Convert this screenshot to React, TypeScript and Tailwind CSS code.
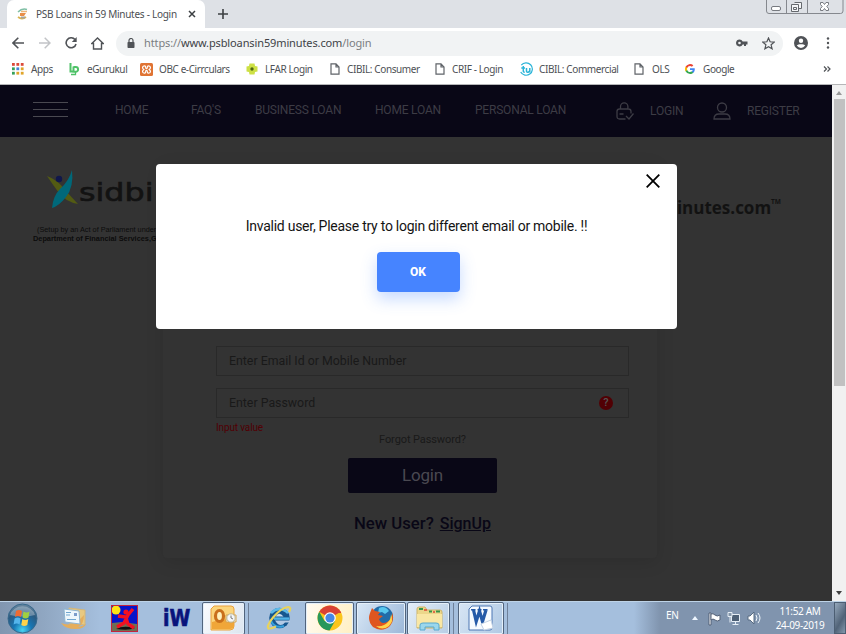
import React from 'react';

function FileIcon() {
  return (
    <svg width="10" height="12" viewBox="0 0 10 12" fill="none" stroke="#5f6368" strokeWidth="1.2">
      <path d="M1 .8h5L9 4v7.2H1zM6 .8V4h3" />
    </svg>
  );
}

function AppsIcon() {
  const colors = ['#dc4a3a', '#dc4a3a', '#dc4a3a', '#35a05a', '#4384d8', '#e0a52a', '#35a05a', '#e0a52a', '#e0a52a'];
  return (
    <svg width="12" height="12" viewBox="0 0 12 12">
      {colors.map((c, i) => (
        <rect key={i} x={(i % 3) * 4.4} y={Math.floor(i / 3) * 4.4} width="2.8" height="2.8" fill={c} />
      ))}
    </svg>
  );
}

function GurukulIcon() {
  return (
    <svg width="12" height="14" viewBox="0 0 12 14" fill="none" stroke="#4fc268">
      <path d="M2.500 1v8.500h3" strokeWidth="2" />
      <path d="M5.500 4.500v6M5.500 5h2.200a2.200 2.200 0 0 1 0 4.800H5.500" strokeWidth="2" />
      <path d="M3 12.500h4.500V10" strokeWidth="1.300" />
    </svg>
  );
}

function XamppIcon() {
  return (
    <svg width="13" height="13" viewBox="0 0 13 13">
      <rect width="13" height="13" rx="1.500" fill="#e07434" />
      <path d="M3.300 3.200c1.600-.9 2.400 0 2.400 1.400 0 1.500 1.600 1.500 1.600 0 0-1.400.8-2.300 2.400-1.400 1.300.8.8 2.300-.5 3.300 1.300 1 1.800 2.500.5 3.300-1.600.9-2.400 0-2.400-1.400 0-1.500-1.600-1.500-1.600 0 0 1.400-.8 2.300-2.400 1.400-1.300-.8-.8-2.300.5-3.300-1.300-1-1.800-2.500-.5-3.300z" fill="none" stroke="#fff" strokeWidth="1.200" />
    </svg>
  );
}

function LfarIcon() {
  return (
    <svg width="12" height="12" viewBox="0 0 12 12">
      <path d="M3.500.5h5l.5 2.500 2.500.5v5L9 9l-.5 2.500h-5L3 9 .5 8.500v-5L3 3z" fill="#cde045" />
      <circle cx="6" cy="6" r="1.700" fill="#4d6510" />
    </svg>
  );
}

function TuIcon() {
  return (
    <svg width="14" height="14" viewBox="0 0 14 14" fill="none" stroke="#2bb4d8" strokeWidth="1.200">
      <path d="M2.300 3.200a6.200 6.200 0 1 1-.6 6.800" />
      <path d="M4.300 4v5q0 1.500 1.500 1M2.300 6H6M7.500 6v3q0 1.400 1.400 1.200Q10.800 10 10.800 8V6v4.500" strokeWidth="1.500" />
    </svg>
  );
}

function GoogleIcon() {
  return (
    <svg width="10" height="10" viewBox="0 0 24 24">
      <path fill="#4285f4" d="M23.500 12.300c0-.8-.1-1.600-.2-2.300H12v4.500h6.500a5.500 5.500 0 0 1-2.400 3.600v3h3.900c2.200-2.100 3.500-5.200 3.500-8.800z" />
      <path fill="#34a853" d="M12 24c3.200 0 6-1.100 8-2.900l-3.900-3c-1.100.7-2.500 1.200-4.100 1.200-3.100 0-5.800-2.100-6.700-5H1.300v3.100A12 12 0 0 0 12 24z" />
      <path fill="#fbbc05" d="M5.300 14.300a7 7 0 0 1 0-4.600V6.600h-4a12 12 0 0 0 0 10.800z" />
      <path fill="#ea4335" d="M12 4.800c1.800 0 3.300.6 4.600 1.800L20 3.200A12 12 0 0 0 1.300 6.600l4 3.100c.9-2.900 3.600-4.900 6.700-4.900z" />
    </svg>
  );
}

function Favicon() {
  return (
    <svg width="14" height="14" viewBox="0 0 14 14" fill="none">
      <path d="M2 5Q6 1 11 2.500" stroke="#7fbfa5" strokeWidth="1.500" />
      <path d="M4 6h6l-2 3H4z" fill="#e88f49" />
      <path d="M5 4.500h6" stroke="#edb77a" strokeWidth="1.500" />
      <path d="M2 10q4 3 8 0" stroke="#d9b451" strokeWidth="1.800" />
      <path d="M5 9.500h4v2H5z" fill="#a7a4a0" />
    </svg>
  );
}

function TabStrip() {
  return (
    <header className="flex h-7 shrink-0 items-start bg-[#dee1e6]">
      <div className="ml-[7px] flex h-7 w-[198px] items-center rounded-t-[7px] bg-white pl-[9px]">
        <Favicon />
        <span className="ml-[6px] w-[150px] whitespace-nowrap text-[10px] tracking-[-0.27px] text-[#4b4e52]">PSB Loans in 59 Minutes - Login</span>
        <svg className="ml-[2px]" width="8" height="8" viewBox="0 0 8 8" stroke="#3c4043" strokeWidth="1.500"><path d="M1 1l6 6M7 1L1 7" /></svg>
      </div>
      <svg className="ml-[13px] mt-[9px]" width="10" height="10" viewBox="0 0 10 10" stroke="#3c4043" strokeWidth="1.600"><path d="M5 0v10M0 5h10" /></svg>
      <svg className="ml-auto mr-[2px]" width="78" height="15" viewBox="0 0 78 15" fill="none" stroke="#85888e">
        <path d="M.5 0v11q0 2.500 2.500 2.500h71.500q2.500 0 2.500-2.500V0M20.500 0v13M41.500 0v13" />
        <rect x="5.500" y="6.500" width="9" height="4" rx="1.500" fill="#fff" stroke="#777a80" />
        <path d="M28.500 2.500h7v6h-3M25.500 4.500h7v7h-7zM27.500 7.500h3v2h-3z" fill="#f4f5f7" stroke="#65686d" />
        <path d="M54.500 2.500h2.500l1.500 2 1.500-2h2.500v2l-1.700 2 1.700 2v2H60l-1.500-2-1.500 2h-2.500v-2l1.700-2-1.700-2z" fill="#fff" stroke="#777a80" />
      </svg>
    </header>
  );
}

function Toolbar() {
  return (
    <div className="flex h-[30px] shrink-0 items-center bg-white pl-3">
      <svg width="12" height="12" viewBox="0 0 12 12" fill="none" stroke="#505357" strokeWidth="1.600"><path d="M12 6H1.200M6.300.8L1 6l5.300 5.200" /></svg>
      <svg className="ml-[15px]" width="12" height="12" viewBox="0 0 12 12" fill="none" stroke="#c2c4c7" strokeWidth="1.500"><path d="M0 6h10.800M5.700.8L11 6l-5.300 5.200" /></svg>
      <svg className="ml-[14px]" width="12" height="12" viewBox="0 0 12 12" fill="none" stroke="#505357" strokeWidth="1.600"><path d="M10 2.600A5 5 0 1 0 11 7" /><path d="M11.700 0v5H6.800z" fill="#505357" stroke="none" /></svg>
      <svg className="ml-[14px]" width="13" height="13" viewBox="0 0 13 13" fill="none" stroke="#505357" strokeWidth="1.400"><path d="M.8 6.500L6.500 1l5.700 5.500H10.500V12h-8V6.500z" /></svg>
      <div className="ml-[12px] flex h-[25px] w-[667px] items-center rounded-full bg-[#f1f3f4] pl-[11px]">
        <svg width="8" height="10" viewBox="0 0 8 10"><rect x=".5" y="4" width="7" height="6" rx=".7" fill="#505357" /><path d="M2 4V2.500a2 2 0 0 1 4 0V4" fill="none" stroke="#505357" strokeWidth="1.200" /></svg>
        <span className="ml-[9px] text-[11px] tracking-[-0.12px] text-[#7b7e82]">https://<span className="text-[#404246]">www.psbloansin59minutes.com</span>/login</span>
        <svg className="ml-auto" width="12" height="8" viewBox="0 0 12 8"><path fill="#505357" fillRule="evenodd" d="M3.500.5a3.500 3.500 0 1 0 3.200 5H8V7h2V5.500h1.500v-3H6.700A3.500 3.500 0 0 0 3.500.5zm0 2.200a1.300 1.300 0 1 1 0 2.600 1.300 1.300 0 0 1 0-2.600z" /></svg>
        <svg className="ml-[14px] mr-[8px]" width="13" height="13" viewBox="0 0 13 13" fill="none" stroke="#505357" strokeWidth="1.200"><path d="M6.500 1l1.600 3.800 4.100.3-3.100 2.700 1 4-3.600-2.100-3.600 2.100 1-4L.8 5.100l4.100-.3z" /></svg>
      </div>
      <svg className="ml-[11px]" width="14" height="14" viewBox="0 0 14 14"><path fillRule="evenodd" fill="#505357" d="M7 0a7 7 0 1 0 0 14A7 7 0 0 0 7 0zm0 2.500a2.200 2.200 0 1 1 0 4.400 2.200 2.200 0 0 1 0-4.400zM2.800 9.600C4 7.700 10 7.700 11.200 9.600Q9.500 12 7 12T2.800 9.600z" /></svg>
      <svg className="ml-[18px]" width="4" height="12" viewBox="0 0 4 12" fill="#505357"><circle cx="2" cy="1.500" r="1.200" /><circle cx="2" cy="6" r="1.200" /><circle cx="2" cy="10.500" r="1.200" /></svg>
    </div>
  );
}

const bookmarks = [
  { name: 'Apps', icon: <AppsIcon />, width: 'w-[56px]', gap: 'gap-[7px]' },
  { name: 'eGurukul', icon: <GurukulIcon />, width: 'w-[72px]', gap: 'gap-[7px]' },
  { name: 'OBC e-Cirrculars', icon: <XamppIcon />, width: 'w-[106px]', gap: 'gap-[6px]' },
  { name: 'LFAR Login', icon: <LfarIcon />, width: 'w-[84px]', gap: 'gap-[7px]' },
  { name: 'CIBIL: Consumer', icon: <FileIcon />, width: 'w-[105px]', gap: 'gap-[7px]' },
  { name: 'CRIF - Login', icon: <FileIcon />, width: 'w-[84px]', gap: 'gap-[7px]' },
  { name: 'CIBIL: Commercial', icon: <TuIcon />, width: 'w-[115px]', gap: 'gap-[6px]' },
  { name: 'OLS', icon: <FileIcon />, width: 'w-[51px]', gap: 'gap-[8px]' },
  { name: 'Google', icon: <GoogleIcon />, width: 'w-[138px]', gap: 'gap-[8px]' },
];

function Bookmarks() {
  return (
    <div className="flex h-[27px] shrink-0 items-center border-b border-[#b5b6b8] bg-white pb-[4px] pl-3 text-[10px] tracking-[-0.4px] text-[#4e5155]">
      {bookmarks.map((b) => (
        <div key={b.name} className={`flex shrink-0 items-center whitespace-nowrap ${b.width} ${b.gap}`}>
          {b.icon}
          <span>{b.name}</span>
        </div>
      ))}
      <svg width="8" height="6" viewBox="0 0 8 6" fill="none" stroke="#505357" strokeWidth="1.200"><path d="M1 .5L3.500 3 1 5.500M4.500 .5L7 3 4.500 5.500" /></svg>
    </div>
  );
}

function Nav() {
  return (
    <nav className="flex h-[52px] shrink-0 items-center bg-[#090716] pl-[33px] font-['Roboto',sans-serif] text-[12px] tracking-[-0.2px] text-[#3d3c45]">
      <div className="flex w-[82px] flex-col gap-[6px] pb-1">
        <i className="h-px w-[35px] bg-[#4a4951]" /><i className="h-px w-[35px] bg-[#4a4951]" /><i className="h-px w-[35px] bg-[#4a4951]" />
      </div>
      <span className="w-[76px] pb-[2px]">HOME</span>
      <span className="w-[64px] pb-[2px]">FAQ'S</span>
      <span className="w-[120px] pb-[2px]">BUSINESS LOAN</span>
      <span className="w-[100px] pb-[2px]">HOME LOAN</span>
      <span className="w-[141px] pb-[2px]">PERSONAL LOAN</span>
      <svg width="18" height="18" viewBox="0 0 18 18" fill="none" stroke="#3d3c45" strokeWidth="1.300"><path d="M4.500 7V4.500a3.700 3.700 0 0 1 7.400 0V7M9.500 17H3.500q-2.500 0-2.500-2.500v-5Q1 7 3.500 7h9Q15 7 15 9.500v2M3.500 12h4M10 14l3 3 4.500-5.500" /></svg>
      <span className="ml-[16px] w-[63px]">LOGIN</span>
      <svg width="18" height="18" viewBox="0 0 18 18" fill="none" stroke="#3d3c45" strokeWidth="1.300"><circle cx="9" cy="5.500" r="4.500" /><path d="M1 17q0-5 5-5h6q5 0 5 5z" /></svg>
      <span className="ml-[16px]">REGISTER</span>
    </nav>
  );
}

function Sidbi() {
  return (
    <div className="ml-[33px] mt-[32px] w-[200px] whitespace-nowrap text-[#0c0c0c]">
      <div className="flex items-start pl-[14px]">
        <svg width="31" height="40" viewBox="0 0 31 40">
          <path d="M0 7Q11 11 18 21L31 35Q19 33 12 24 6 16 0 7z" fill="#535b13" />
          <path d="M25 1Q27 18 19 28 12 37 5 39 6 27 13 20 22 12 25 1z" fill="#006879" />
          <circle cx="12" cy="10" r="3.200" fill="#10174b" />
        </svg>
        <div className="ml-[1px] mt-[7px] h-[33px] w-[75px] font-['DejaVu_Sans',sans-serif] text-[25px] leading-[33px] text-[#121212] [-webkit-text-stroke:0.6px_#121212]"><span className="inline-block origin-left scale-x-[1.27]">sidbi</span></div>
      </div>
      <div className="mt-[16px] pl-1 font-['Liberation_Sans',Arial,sans-serif] text-[7.3px] leading-[9px]">(Setup by an Act of Parliament under</div>
      <div className="font-['Liberation_Sans',Arial,sans-serif] text-[7.35px] leading-[9px] font-bold">Department of Financial Services,Government</div>
    </div>
  );
}

function LoginCard() {
  return (
    <section className="ml-[163px] mt-[-79px] flex h-[394px] w-[494px] flex-col items-center rounded bg-[#333] pl-[53px] pr-[28px] pt-[182px] shadow-[0_4px_18px_rgba(0,0,0,0.12)]">
      <div className="flex h-[30px] w-[413px] shrink-0 items-center border border-[#292929] pl-3 text-[12.35px] text-[#191919]">Enter Email Id or Mobile Number</div>
      <div className="mt-3 flex h-[30px] w-[413px] shrink-0 items-center border border-[#292929] pl-3 pr-[15px] text-[12.35px] text-[#191919]">
        Enter Password
        <span className="ml-auto flex size-[14px] items-center justify-center rounded-full bg-[#510004] text-[11px] font-medium text-[#555]">?</span>
      </div>
      <span className="mt-[3px] h-[12px] w-[413px] text-[10px] leading-[13px] tracking-[-0.15px] text-[#510004]">Input value</span>
      <span className="h-[14px] text-[11px] leading-[14px] tracking-[-0.1px] text-[#191919]">Forgot Password?</span>
      <div className="mt-[11px] flex h-[35px] w-[149px] shrink-0 items-center justify-center rounded-[2px] bg-[#090716] pt-px text-[17px] tracking-[-0.2px] text-[#4a4951]">Login</div>
      <div className="mt-[21px] flex gap-[6px] text-[16.7px] leading-[20px] font-medium text-[#090716]"><span>New User?</span><span className="text-[16px] underline">SignUp</span></div>
    </section>
  );
}

function WebPage() {
  return (
    <div className="flex h-[516px] shrink-0">
      <main className="relative w-[832px] overflow-hidden bg-[#333] font-['Roboto',sans-serif]">
        <Nav />
        <div className="flex h-[106px] justify-between">
          <Sidbi />
          <div className="mr-[51px] mt-[60px] flex items-start font-['Open_Sans',sans-serif] text-[17px] leading-[22px] font-bold text-[#121212]"><span>psbloansin59minutes.com</span><span className="text-[6.5px] leading-[9px]">TM</span></div>
        </div>
        <div className="flex"><LoginCard /></div>
        <div role="dialog" className="absolute left-[156px] top-[79px] flex h-[165px] w-[521px] flex-col items-center rounded-[4px] bg-white pt-[53px] text-[#141414]">
          <svg className="absolute right-[17px] top-[10px]" width="14" height="14" viewBox="0 0 14 14" stroke="#000" strokeWidth="1.800"><path d="M.7.700l12.600 12.600M13.300.7L.7 13.300" /></svg>
          <p className="text-[14px] leading-[18px] tracking-[-0.26px]">Invalid user, Please try to login different email or mobile. !!</p>
          <button className="ml-[3px] mt-[17px] h-[40px] w-[83px] rounded-[4px] bg-[#4684ff] text-[12px] font-extrabold text-white shadow-[0_7px_16px_rgba(70,132,255,0.3)]">OK</button>
        </div>
      </main>
      <aside className="flex w-[14px] flex-col items-center bg-[#f1f1f1]">
        <svg className="mt-[6px]" width="6" height="4" viewBox="0 0 6 4"><path d="M0 4l3-4 3 4z" fill="#989898" /></svg>
        <div className="ml-[1px] mt-[4px] h-[287px] w-[11px] bg-[#c1c1c1]" />
        <svg className="mb-[6px] mt-auto" width="6" height="4" viewBox="0 0 6 4"><path d="M0 0l3 4 3-4z" fill="#404040" /></svg>
      </aside>
    </div>
  );
}

function Orb() {
  return (
    <svg width="31" height="31" viewBox="0 0 31 31">
      <defs><radialGradient id="orb" cx=".5" cy=".9" r=".9"><stop offset="0" stopColor="#48d4f2" /><stop offset=".35" stopColor="#1776b4" /><stop offset=".7" stopColor="#2c5a80" /><stop offset="1" stopColor="#6c8aa2" /></radialGradient></defs>
      <circle cx="15.500" cy="15.500" r="14.500" fill="url(#orb)" stroke="#36688c" />
      <path d="M3 12a13 12 0 0 1 25 0q-12 3-25 0z" fill="#fff" opacity=".3" />
      <path d="M9 8q3-2 6 0l-1 6q-3-2-6 0z" fill="#ef6b32" /><path d="M16.500 8.500q3 2 6 0l-1 6q-3 2-6 0z" fill="#a0d040" />
      <path d="M7.600 15.500q3-2 6 0l-1 6q-3-2-6 0z" fill="#55b5eb" /><path d="M15.300 16q3 2 6 0l-1 6q-3 2-6 0z" fill="#ffd24a" />
    </svg>
  );
}

function MailIcon() {
  return (
    <svg width="26" height="24" viewBox="0 0 26 24"><path d="M8 2l16 2v15L8 17z" fill="#e8c981" stroke="#d3b67a" /><path d="M0 17q12 5 23-8 0 9-6 12 4 0 8-3-2 5-10 5Q4 23 0 17z" fill="#e5ae5c" /><path d="M3 3l15 2 1 13-15-2z" fill="#eef7fc" stroke="#8fb5d1" /><path d="M5 6.500h5M5 9h4M6 13.500h9" stroke="#70a6d0" /><path d="M13 7h3v3h-3z" fill="#7b9ccb" /></svg>
  );
}

function FigureIcon() {
  return (
    <svg width="27" height="27" viewBox="0 0 27 27"><rect x=".5" y=".5" width="26" height="26" fill="#0714ca" /><path d="M1 18l10-1 15 2v7H1z" fill="#6e6e52" /><path d="M5 24q7-4 19-1-6 3-19 1z" fill="#111" /><circle cx="5" cy="5" r="4.500" fill="#ffe414" /><path d="M6 22l7-4 4-8 5-6M7 11l8 1M15 13l2 6 6 4" fill="none" stroke="#f31021" strokeWidth="3.400" /><circle cx="15" cy="7" r="2.600" fill="#f31021" /><rect x=".5" y=".5" width="26" height="26" fill="none" stroke="#c4233d" /></svg>
  );
}

function OutlookIcon() {
  return (
    <svg width="27" height="26" viewBox="0 0 27 26"><path d="M4 1h17q3 0 3 3v17q0 4-4 4H1V4z" fill="#fbd57c" stroke="#e9a13c" /><path d="M2 17q11-4 22-2v6q-1 3-4 3H2z" fill="#f0a638" /><ellipse cx="9.500" cy="11" rx="4" ry="5.500" fill="#fff1bc" stroke="#c9701c" strokeWidth="3.200" /><path d="M16 10h10v7H16z" fill="#fff7d9" stroke="#d3a251" /><circle cx="21" cy="13" r="4.200" fill="#f4f7fa" stroke="#bdb391" /><path d="M21 10.500V13l2 1" stroke="#777" fill="none" /></svg>
  );
}

function IeIcon() {
  return (
    <svg width="26" height="26" viewBox="0 0 26 26" fill="none"><circle cx="13.500" cy="13" r="10.300" fill="#17578f" /><path d="M5 8q8-8 17 0" stroke="#5cb9e8" strokeWidth="2.500" /><path d="M9.500 11.500q3.500-5.500 8 0z" fill="#c9def3" /><path d="M9 15.500h15v2h-5q-5 6-10-2z" fill="#b4cbe6" /><path d="M8 13.600h15.500" stroke="#52b4e6" strokeWidth="2.400" /><path d="M5 16q4 8 13 5" stroke="#37a0dc" strokeWidth="2" /><path d="M3 24C-2 21 13 3 22 2q4 0 1 5M2 20.500Q1 26 10 21.500" stroke="#e8d35c" strokeWidth="2.200" /></svg>
  );
}

function ChromeIcon() {
  return (
    <svg width="26" height="26" viewBox="0 0 26 26"><circle cx="13" cy="13" r="12.500" fill="#fbc51b" /><path d="M13 13L2.200 6.800A12.500 12.500 0 0 1 23.800 6.800z" fill="#d94335" /><path d="M2.200 6.800A12.500 12.500 0 0 0 12.500 25.500L18 16 7.600 16z" fill="#27975a" /><path d="M13 7h11v1H17z" fill="#d94335" /><circle cx="13" cy="13" r="5.800" fill="#fff" /><circle cx="13" cy="13" r="4.600" fill="#4688e5" /></svg>
  );
}

function FirefoxIcon() {
  return (
    <svg width="26" height="26" viewBox="0 0 26 26"><circle cx="14" cy="12" r="11" fill="#216ca9" /><path d="M11 3q6-3 10 3l-4 3-3-2-4 1z" fill="#58c7ed" /><path d="M24 7q3 8-2 14-8 7-17 1Q-1 16 2 8l2-5 3 3 5 1-2 3 5 1-4 3q2 6 8 3 6-3 5-10z" fill="#df5620" /><path d="M23 9q3 7-2 12-7 5-13 0 8 1 12-4 3-3 3-8z" fill="#ffd44a" /></svg>
  );
}

function FolderIcon() {
  return (
    <svg width="28" height="25" viewBox="0 0 28 25"><path d="M2 3q0-2 2-2h6l2 3h13q2 0 2 2v16H2z" fill="#ecd78a" stroke="#ceb56b" /><path d="M4 3h4M14 5.500h3M21 5.500h4" stroke="#37934a" strokeWidth="2" /><path d="M9 4h3M18 6h2" stroke="#db4a37" strokeWidth="1.500" /><path d="M2 8h25v13H2z" fill="#f9e7a4" /><path d="M5 24v-5q0-2 3-2h13q3 0 3 2v5h-5v-3H10v3z" fill="#9bd7ec" stroke="#58a9cf" /></svg>
  );
}

function WordIcon() {
  return (
    <svg width="26" height="26" viewBox="0 0 26 26"><path d="M4 1h18q2 0 2 2v20q0 2-2 2H1V4z" fill="#f5faff" stroke="#4d77b3" /><path d="M3 4.800h4.500M9.500 4.800h4M15 4.800h4.500" stroke="#245aa8" strokeWidth="1.400" /><path d="M5.500 5l2.700 11.500L11.500 6l3 10.500L18 5" fill="none" stroke="#245aa8" strokeWidth="3.200" /><path d="M13 19l10-4 2 8-9 2z" fill="#fff" stroke="#c3d2e4" /></svg>
  );
}

function TaskButton({ children, className }: { children: React.ReactNode; className: string }) {
  return <div className={`flex h-[33px] shrink-0 items-center justify-center rounded-[2px] border border-[#51647d] shadow-[inset_0_0_0_1px_#e4eff9] ${className}`}>{children}</div>;
}

function Taskbar() {
  return (
    <footer className="flex h-[33px] shrink-0 items-center border-t border-[#bed3e7] bg-[linear-gradient(90deg,#8196b0_0,#90a7c2_45px,#a5bfdd_100px,#a5bfdd_634px,#8094ae_660px,#8094ae_100%)]">
      <div className="flex w-[46px] justify-center pr-[2px]"><Orb /></div>
      <div className="flex w-[56px] justify-center"><MailIcon /></div>
      <div className="flex w-[45px] justify-center"><FigureIcon /></div>
      <div className="flex w-[55px] justify-center pl-[4px] font-['DejaVu_Sans',sans-serif] text-[23px] leading-none font-bold text-[#09137b]"><span className="inline-block scale-x-[.82] [-webkit-text-stroke:0.7px_#09137b]">iW</span></div>
      <TaskButton className="w-[43px] bg-[linear-gradient(120deg,#fbfcfe,#dce5ef)]"><OutlookIcon /></TaskButton>
      <div className="h-[31px] w-[4px] border-r border-[#6e8099]" />
      <div className="flex w-[56px] justify-center pl-[4px]"><IeIcon /></div>
      <TaskButton className="w-[49px] bg-[linear-gradient(110deg,#fffaf1,#fff0c3)]"><ChromeIcon /></TaskButton>
      <TaskButton className="ml-[2px] w-[50px] bg-[linear-gradient(120deg,#d8e7f6,#9bb7d8)]"><FirefoxIcon /></TaskButton>
      <TaskButton className="ml-px w-[43px] bg-[linear-gradient(120deg,#e4eef8,#b7cde5)]"><FolderIcon /></TaskButton>
      <div className="h-[31px] w-[4px] border-r border-[#6e8099]" />
      <TaskButton className="ml-[4px] w-[46px] bg-[linear-gradient(120deg,#d7e5f4,#b0c9e4)]"><WordIcon /></TaskButton>
      <div className="h-[31px] w-[4px] border-r border-[#6e8099]" />
      <span className="ml-[158px] w-[26px] pb-[5px] text-[10px] tracking-[-0.3px] text-white">EN</span>
      <svg width="6" height="4" viewBox="0 0 6 4"><path d="M0 4l3-4 3 4z" fill="#eef6ff" /></svg>
      <svg className="ml-[9px]" width="15" height="15" viewBox="0 0 15 15" stroke="#536177"><path d="M2 2h2v12H2z" fill="#fff" /><path d="M4 3q2-1 4 1t5 0v5q-3 2-5 0t-4 0z" fill="#fff" /></svg>
      <svg className="ml-[5px]" width="15" height="15" viewBox="0 0 15 15" stroke="#e5edf5" fill="none"><path d="M4.500 3.500h8v7h-8z" fill="#4d6076" /><path d="M1 1.500h4v4H1z" fill="#8395a9" /><path d="M3 6v5.500M8.500 11v2M5.500 13.500h6" /></svg>
      <svg className="ml-[5px]" width="14" height="14" viewBox="0 0 14 14" fill="none" stroke="#eff6fc"><path d="M1 5h2l4-4v12L3 9H1z" fill="#fff" stroke="#576b81" /><path d="M9 4q2 3 0 6M11 2q4 5 0 10" /></svg>
      <div className="ml-[13px] w-[52px] text-center text-[10px] leading-[14px] tracking-[-0.35px] whitespace-nowrap text-white">11:52 AM<br />24-09-2019</div>
      <div className="ml-auto h-[32px] w-[12px] border border-[#4c5e73] bg-[linear-gradient(120deg,#95a8bc,#516378_60%,#8498ac)]" />
    </footer>
  );
}

export default function App() {
  return (
    <div className="flex h-[634px] w-[846px] flex-col overflow-hidden bg-white font-['Noto_Sans','Open_Sans',sans-serif] leading-normal">
      <TabStrip />
      <Toolbar />
      <Bookmarks />
      <WebPage />
      <Taskbar />
    </div>
  );
}
